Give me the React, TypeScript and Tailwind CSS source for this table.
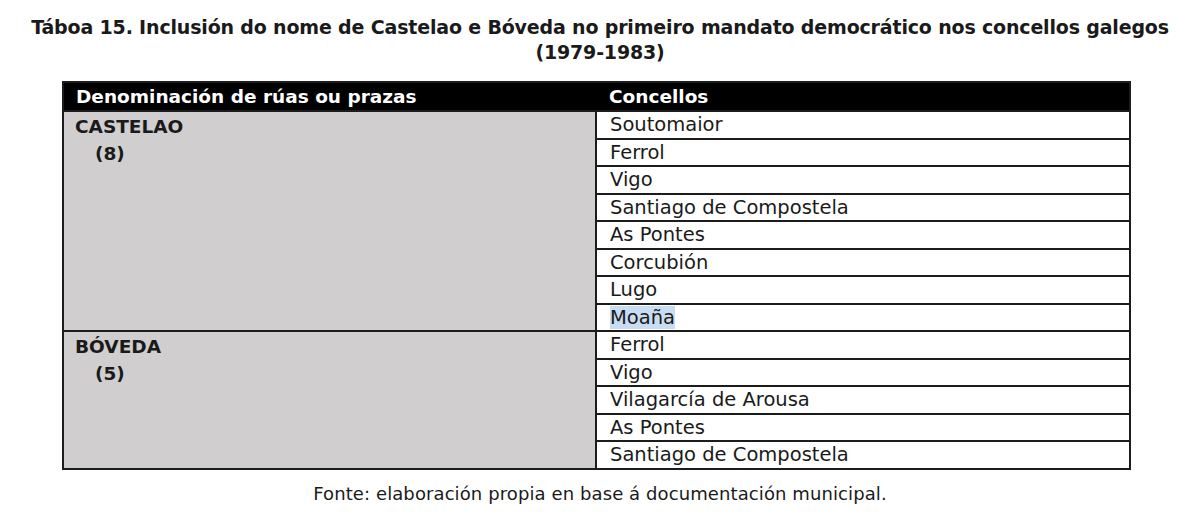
const castelao = [
  "Soutomaior",
  "Ferrol",
  "Vigo",
  "Santiago de Compostela",
  "As Pontes",
  "Corcubión",
  "Lugo",
  "Moaña",
];

const boveda = ["Ferrol", "Vigo", "Vilagarcía de Arousa", "As Pontes", "Santiago de Compostela"];

function Group({ name, count, items }: { name: string; count: number; items: string[] }) {
  return (
    <>
      {items.map((item, i) => (
        <tr key={i} className="h-[27.5px]">
          {i === 0 && (
            <td
              rowSpan={items.length}
              className="border-2 border-[#1c1c1c] bg-[#d0cece] px-[11px] pt-[1px] align-top font-bold leading-[27px] text-[18.5px]"
            >
              <div>{name}</div>
              <div className="pl-[20px]">({count})</div>
            </td>
          )}
          <td className="border-2 border-[#1c1c1c] bg-white px-[13px] py-0 leading-[23px]">
            {item === "Moaña" ? <span className="bg-[#c8ddf2]">{item}</span> : item}
          </td>
        </tr>
      ))}
    </>
  );
}

export default function App() {
  return (
    <div
      className="w-[1200px] h-[523px] bg-white text-[#1a1a1a]"
      style={{ fontFamily: '"DejaVu Sans", Verdana, sans-serif' }}
    >
      <div className="pt-[15px] text-center text-[19px] font-bold leading-[25px] tracking-[-0.17px]">
        <div>Táboa 15. Inclusión do nome de Castelao e Bóveda no primeiro mandato democrático nos concellos galegos</div>
        <div>(1979-1983)</div>
      </div>

      <div className="pl-[62px] pt-[16px]">
        <table className="w-[1069px] border-collapse border-2 border-[#1c1c1c] text-[19.5px]">
          <colgroup>
            <col className="w-[533px]" />
            <col />
          </colgroup>
          <thead>
            <tr className="h-[29px] bg-black text-white">
              <th className="px-[12px] text-left text-[18.5px] font-bold leading-[26px]">Denominación de rúas ou prazas</th>
              <th className="px-[13px] text-left text-[18.5px] font-bold leading-[26px]">Concellos</th>
            </tr>
          </thead>
          <tbody>
            <Group name="CASTELAO" count={8} items={castelao} />
            <Group name="BÓVEDA" count={5} items={boveda} />
          </tbody>
        </table>
      </div>

      <p className="pt-[13px] text-center text-[18px] leading-[22px] tracking-[0.1px]">
        Fonte: elaboración propia en base á documentación municipal.
      </p>
    </div>
  );
}
